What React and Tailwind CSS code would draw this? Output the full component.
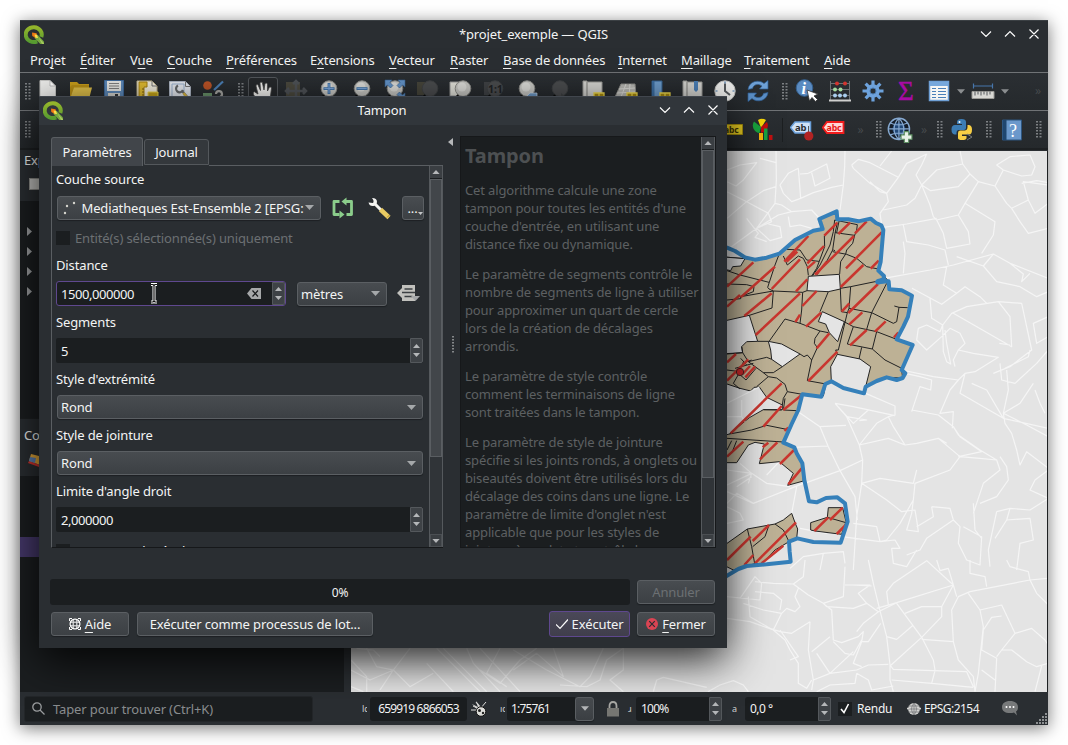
import React from "react";

/* ---------- map data ---------- */

const LIMIT =
  "M-20 280L21 293L45 303L75 322L105 329L140 323L178 311L225 270L280 242L308 237L298 207L350 184L352 208L385 208L415 214L452 206L468 219L484 226L490 240L482 335L475 362L492 378L490 390L472 396L506 394L508 418L545 421L576 437L564 500L550 530L530 568L578 585L545 660L556 670L548 684L530 690L500 682L470 693L437 710L432 730L370 714L334 694L316 702L304 740L247 733L235 780L215 822L190 878L223 892L230 910L247 940L253 990L267 1054L290 1057L318 1044L352 1042L375 1060L383 1115L362 1178L280 1176L232 1165L207 1175L209 1205L212 1235L140 1243L80 1248L55 1257L21 1277L-20 1310";

const AREAS = [
  "M0 320L75 326L105 329L140 323L178 311L225 270L280 242L308 237L298 207L350 184L352 208L385 208L415 214L452 206L484 226L490 240L482 335L475 362L492 378L506 394L508 418L545 421L576 437L564 500L530 568L578 585L545 660L548 684L500 682L437 710L432 730L370 714L334 694L318 702L310 738L247 733L235 780L215 822L190 878L223 892L247 940L250 993L203 1006L220 970L178 935L118 941L133 882L105 877L85 885L50 938L0 938Z",
  "M0 1195L82 1137L165 1122L190 1110L215 1090L225 1118L233 1137L230 1165L207 1175L165 1200L128 1240L104 1241L40 1260L0 1240Z",
  "M325 1073L368 1073L378 1115L365 1153L285 1143L272 1140L272 1118L322 1102Z",
];

const HOLES = [
  "M0 514L21 511L88 496L113 574L80 575L65 590L68 608L0 612Z",
  "M145 574L185 582L240 612L187 650L155 628L152 600Z",
  "M265 379L358 373L361 417L325 425L261 422Z",
  "M307 485L373 515L353 575L328 548L317 522L295 515Z",
  "M352 613L420 627L452 650L437 710L432 730L370 714L334 694L332 650Z",
  "M0 695L60 715L92 723L102 712L118 711L140 742L187 765L187 779L130 779L88 803L28 852L0 860Z",
  "M0 320L75 326L62 348L38 350L32 362L0 355Z",
];

const HATCHES =
  "M352 218L313 257M390 218L355 252M440 214L405 250M485 247L378 355M402 258L285 374M320 335L290 372M476 332L452 356M430 345L362 411M388 460L365 485M474 402L385 489M265 258L193 335M232 305L200 335M312 288L262 340M285 335L262 355M240 328L155 417M262 388L228 424M165 350L62 442M100 337L21 410M240 430L107 555M290 423L247 468M240 494L226 516M303 488L258 530M155 430L73 498M60 435L21 470M328 550L290 595M352 605L265 693M427 487L388 523M497 514L465 545M440 540L390 586M535 548L522 562M48 612L21 637M85 628L21 692M90 648L68 672M105 650L76 682M185 700L32 850M245 735L190 780M185 768L130 830M205 833L193 842M70 875L21 920M145 878L128 892M172 877L120 928M222 900L180 942M245 955L205 1003M147 1125L98 1173M92 1160L21 1230M228 1117L105 1240M190 1187L125 1240M100 1215L73 1245M368 1073L330 1110M325 1102L283 1143M377 1125L350 1152";

const PARCELS =
  "M344 210L412 224L410 240L404 256L345 248M344 210L340 245L330 285L300 345L278 377M352 218L345 250L338 300L318 338L290 375M357 214L350 248M404 256L398 280L380 300L377 312M345 302L340 300M338 305L380 313L410 325L440 350L475 357M377 312L362 335L359 372M361 417L364 485L382 488L387 475L392 410L470 394M392 410L361 415M313 257L314 290L290 355L275 378M200 298L240 300L260 330L297 334M190 318L202 345L235 318L250 325L262 350L265 376M178 311L165 345L143 412L147 417L160 423L248 427L261 422M21 362L60 375L147 397M21 402L80 404L102 410L100 425L62 440L62 446L21 450M62 440L160 423L156 474L88 496M248 427L245 480L240 520M325 425L300 485M240 520L300 543L325 548M148 573L195 507L240 520M300 543L285 565L283 580L292 593L275 630L262 692L318 702M275 630L262 615L252 620L240 612M382 488L355 600L347 600L352 613M387 475L455 488L440 538M455 488L500 400M455 488L520 520L530 515L537 472L523 468M537 472L563 473M400 530L382 582L457 597L470 545L400 530L372 515M470 545L530 568M457 597L495 630L545 655M425 592L417 627M113 574L145 574M65 590L68 608L85 635L130 668L160 668L187 650M85 635L140 622L155 628M21 612L68 608M130 668L145 680L110 710M145 680L170 684L195 703L202 725L190 745L187 765M202 725L247 733M195 745L190 780L230 782M66 640L95 630M62 625L80 645M45 655L100 640M55 670L78 690L108 655M21 660L60 665L40 700L60 717M130 779L185 780M28 852L95 840L140 826L200 838M21 865L190 876M21 900L35 872M35 910L50 872M82 1137L95 1190L104 1241M147 1125L135 1160L98 1190M165 1122L190 1140L207 1175M322 1102L378 1118";

const STREETS =
  "M168 3L169 90L165 160M165 160L110 235L21 300M21 60L60 45L110 38L70 90L48 108L21 95M120 25L168 38M21 125L80 155L145 190M80 155L130 122L168 110M80 155L21 205M110 235L175 195L215 185L185 165L165 160M145 190L155 215L110 235L150 272L185 262L180 230L145 222M80 205L115 250L105 262L140 275M215 185L275 180L300 207M205 200L210 230L240 225L275 235M235 55L205 70L180 105L190 130L215 155L242 145L235 55ZM265 70L320 42L330 85L285 108L275 68M240 72L265 70M242 145L280 128L335 112L370 105M375 3L374 50L370 105L360 180M395 45L415 28L450 38L535 82L500 130L450 100L400 55L395 45M515 3L480 48M535 82L560 40L600 22L620 12M500 130L505 155L480 190L485 225M450 95L480 125L500 130M620 12L605 45L588 75L605 105L585 145L560 165L490 180M605 105L650 60L728 42L720 3M728 42L750 72L775 95L825 108L850 60L905 78L935 75L945 50L930 15L870 20L830 45L850 60M750 72L715 110L632 122L605 105M605 105L630 165L640 200L650 210L715 195L735 160L775 95M735 160L825 215L820 255L785 310M825 108L860 160L875 175L925 150L910 95L985 105M925 150L945 190L985 160M875 175L900 215L925 250L985 235M905 100L950 92L985 98M490 232L560 222L650 205M550 225L560 275L625 285L675 300L685 345M650 210L670 250L680 295L750 282L745 245L715 195M550 275L555 310L550 370M492 385L630 360L700 345L820 312L790 348L710 320M680 350L670 405L710 430L665 463L576 415M820 312L870 340L985 385M790 348L830 395L900 410L950 440L985 425M710 430L735 410L780 440L800 460M870 340L910 372L905 395L930 370M630 445L635 505L668 525L695 490L740 470L835 455L905 460L935 600L870 650L820 670M835 455L870 500L875 590L700 490M870 585L838 580M930 600L925 620L855 655M668 525L660 545L620 525L595 535L590 570L620 600L665 560M668 525L670 605L680 635L692 642L680 580L675 540M665 560L690 535L720 550L735 580L715 600L700 630L705 650M715 600L760 610L835 622L765 665L735 670L715 690M735 670L720 730L850 805M715 690L640 680L545 660M556 670L600 680L635 690L632 720L600 710L575 785M715 690L690 720L660 790L700 785L697 835M575 780L655 795L700 830L715 855M437 730L525 768L525 795L505 800L520 830L555 885M345 760L400 770L525 797M345 760L380 800L418 885M345 760L400 820L445 780M380 800L440 810L418 812M505 800L470 820L418 885M418 885L505 865L555 885L590 880L655 865L680 880M418 885L428 930L425 1000L410 1100L400 1260M230 782L300 830L325 890L360 962L405 1040L412 1110M215 892L325 888M300 830L378 826M253 1000L360 962L428 930M425 1000L500 1050L545 1085L585 1080L590 1110M425 1000L480 985L580 1000L590 960M715 855L780 900L830 930L840 960L790 1000L770 1060L760 1090M655 865L720 920L780 925L830 930M720 920L690 960L585 1000L580 1050L540 1120L500 1170L480 1175M850 790L855 820L875 850L890 900L900 945L920 905L985 955M755 700L800 720L850 805L985 835M860 660L865 720L850 790L900 760L940 700M700 830L720 860L785 905L715 920M850 790L920 825L985 860M580 1050L575 1090L560 1140L595 1145L590 1110M635 1070L690 1075L700 1110L720 1130L715 1180L740 1230L780 1245L785 1160L730 1130M700 1110L620 1165L600 1200L560 1215M635 1070L640 1100L590 1130M760 1060L765 1140L785 1165M780 1060L830 1040L865 990L860 950L840 920M830 1085L870 1075L930 1080L985 1045M830 1085L805 1200L810 1250M870 1075L860 1110L825 1165M860 1110L930 1105L940 1170L900 1180L890 1260M985 1045L930 1020L945 990L985 960M400 1120L470 1130L480 1175L525 1170L540 1195L515 1195L520 1240L560 1250L590 1200M365 1160L480 1175M21 960L95 970L140 1000L210 1010M95 970L21 1005M178 935L140 975M21 1025L100 1060L250 1000M100 1060L50 1030L21 1060M60 940L95 970L85 1000M230 1010L215 1090M21 1070L60 1090L70 1110L21 1120M240 1135L320 1150M95 980L50 1010M300 1260L310 1210L370 1205L375 1240M310 1210L250 1220L210 1255M840 640L845 690L885 700L950 640L985 600M985 500L940 520L950 580L985 560M945 720L960 760L975 790";

const STREETS_SOUTH =
  "M21 1340L120 1350L125 1300L105 1280L60 1345M105 1295L160 1300L220 1302L250 1280L255 1230M220 1302L265 1335L310 1360L370 1340L375 1250M310 1360L320 1370L400 1375L440 1360L475 1385M440 1360L415 1330L450 1305L375 1305M395 1305L455 1308M105 1325L160 1330L185 1350L180 1380M70 1360L130 1380L185 1390L200 1375L225 1385L240 1370L225 1340L235 1315M85 1340L90 1400L150 1435L180 1445L215 1450L270 1415M21 1405L90 1415L160 1440L195 1470L210 1500L235 1540L235 1600L260 1615L275 1590M180 1440L235 1520L210 1530M160 1440L185 1390M315 1365L335 1380L340 1470L365 1478L415 1460L430 1445L425 1475L400 1540L425 1550M270 1415L265 1500L275 1560L280 1590L330 1570L410 1560L445 1545L505 1543M275 1505L330 1460M290 1510L330 1570L400 1505M340 1475L375 1510L400 1515L425 1470M425 1475L445 1475L482 1420M410 1445L430 1420L475 1385M445 1230L460 1300L482 1390L500 1460L510 1545L510 1590L520 1625M470 1375L530 1358L700 1305M505 1365L500 1325L520 1300L620 1232L700 1305L710 1340M530 1360L605 1462L640 1530L645 1560M475 1385L530 1358M555 1390L605 1370L665 1370L700 1305M665 1370L665 1400L605 1462L510 1548M605 1468L700 1475M500 1460L530 1468L580 1425M700 1475L695 1380L715 1340L750 1325L930 1290L985 1285M700 1475L715 1530L760 1580L765 1625M510 1545L520 1558L640 1562L740 1565L760 1610M515 1590L635 1600L760 1612M635 1600L645 1562M745 1330L780 1380L845 1365L885 1450L935 1435L975 1470L985 1485M780 1380L790 1430L775 1570L765 1625M845 1398L815 1402L790 1440L785 1500L830 1525L825 1625M785 1560L825 1590M830 1520L845 1500L885 1450M845 1500L875 1500L920 1535L950 1550L985 1540M965 1548L945 1625M930 1290L925 1265L870 1250L860 1230M930 1290L950 1330L985 1365M650 1230L660 1262L685 1255L700 1305M750 1230L750 1270L795 1280L800 1310M280 1590L275 1620M410 1570L405 1600L330 1605L290 1625M410 1570L445 1590L455 1620L520 1608M-36 1625L0 1605L40 1592L70 1605L85 1625M-200 1625L-190 1590L-170 1582L-40 1612M-290 1625L-330 1590L-290 1560L-290 1495L-340 1530L-360 1590L-400 1610L-480 1605M-350 1495L-390 1580L-420 1610L-520 1560L-620 1500M-500 1495L-470 1580L-550 1510L-620 1560M-550 1495L-600 1530L-660 1600L-720 1560M-660 1495L-700 1570L-640 1610M-720 1495L-600 1625M-760 1495L-740 1540L-660 1625M-830 1495L-700 1625M-850 1495L-720 1625M-880 1540L-800 1625M-860 1570L-930 1610L-980 1560L-930 1495M-980 1560L-1020 1620M-980 1560L-1050 1590L-1107 1560M-1060 1495L-1030 1550L-980 1560M-1107 1530L-1060 1580L-1060 1625M-1107 1610L-1070 1625M-1090 1495L-1040 1500L-1020 1520";

function MapCanvas() {
  return (
    <svg className="block h-[541px] w-[696px] shrink-0" viewBox="-1107 3 2088 1623" preserveAspectRatio="none" fill="none">
      <rect x="-1107" y="3" width="2088" height="1623" fill="#e4e4e4" />
      <path d={STREETS} stroke="#f5f5f5" strokeWidth="3.6" strokeLinejoin="round" />
      <path d={STREETS_SOUTH} stroke="#f5f5f5" strokeWidth="3.6" strokeLinejoin="round" />
      {AREAS.map((d) => (
        <path key={d} d={d} fill="#bdb195" stroke="#232323" strokeWidth="3" />
      ))}
      {HOLES.map((d) => (
        <path key={d} d={d} fill="#e4e4e4" stroke="#232323" strokeWidth="3" />
      ))}
      <path d="M65 750L65 800L75 815M118 711L21 760M21 800L65 800" stroke="#f5f5f5" strokeWidth="3.6" />
      <path d={PARCELS} stroke="#232323" strokeWidth="3" strokeLinejoin="round" />
      <path d={HATCHES} stroke="#c9362f" strokeWidth="7.5" />
      <path d={LIMIT} stroke="#3580ba" strokeWidth="12" strokeLinejoin="round" />
      <path d="M475 395L492 391" stroke="#3580ba" strokeWidth="17" strokeLinecap="round" />
      <circle cx="60" cy="666" r="11" fill="#c9282b" stroke="#30201e" strokeWidth="2.5" />
    </svg>
  );
}

/* ---------- icons ---------- */

function Icon({ children, className = "h-6 w-6" }) {
  return (
    <svg className={"block shrink-0 " + className} viewBox="0 0 24 24" fill="none">
      {children}
    </svg>
  );
}

function QgisLogo() {
  return (
    <svg className="block h-5 w-5 shrink-0" viewBox="0 0 20 20" fill="none">
      <defs>
        <linearGradient id="qg" x1="0" y1="0" x2="0" y2="1">
          <stop offset="0" stopColor="#94b52b" />
          <stop offset="1" stopColor="#569a30" />
        </linearGradient>
      </defs>
      <path d="M13.2 16.3A8 7.4 0 1 1 17.3 12" stroke="url(#qg)" strokeWidth="4" />
      <path d="M11 10.5L13.5 9.8L20 16.5V19H16.3L10.5 13Z" fill="#76a83f" />
      <path d="M14.5 12.5L20 18.2V19H18Z" fill="#a6c95f" />
      <path d="M8 7.5L12.6 8.2L13 11.5L11.8 13L8.3 11Z" fill="#ee7913" />
      <path d="M10.5 9.5L13 9.8L14 13L11.5 12.8Z" fill="#f8e04b" />
    </svg>
  );
}

function Lens({ dim, children }) {
  return (
    <g>
      <path d="M8 16L3 22" stroke="#0b0c0d" strokeWidth="3.4" />
      <circle cx="12" cy="9.6" r="7.8" fill={dim ? "#4b4d4f" : "#c9c9c5"} stroke={dim ? "#3f4244" : "#8c8c88"} />
      {!dim && <circle cx="11" cy="8" r="4.5" fill="#dededa" />}
      {children}
    </g>
  );
}

function Badge() {
  return <path d="M13 14h10v10H13zM18 14v8M14 19h8" fill="#a98c0f" stroke="#efd94e" strokeWidth="1.3" />;
}

const MAIN_TOOLS_A = [
  <Icon key="new"><path d="M4 1.5h10l5.500 5.500V22H4Z" fill="#ececea" stroke="#c4c4c2" /><path d="M14 1.500V7h5.500Z" fill="#fff" stroke="#aaa" strokeWidth=".7" /></Icon>,
  <Icon key="open"><path d="M1 3h7l2 2h10v4H1Z" fill="#c99e1a" /><path d="M3 6h17v14H1V8Z" fill="#b88f15" /><path d="M5 8.500h18L20 20H1Z" fill="#e0c04a" /></Icon>,
  <Icon key="save"><path d="M2.500 1.500h19v20h-19Z" fill="#5f8bbb" stroke="#3e6a9c" /><path d="M5 2h14v10H5Z" fill="#ebebe7" /><path d="M7 4.500h10M7 7h10M7 9.500h10" stroke="#808080" strokeWidth="1.200" /><path d="M6 14h12v7H6Z" fill="#d5d5d0" /><path d="M13 15h3v5h-3Z" fill="#35383a" /></Icon>,
  <Icon key="layout"><path d="M2 2h15l5 5v15H2Z" fill="#f3efdf" stroke="#c2b58b" /><path d="M4 3h8v5H9v14H4Z" fill="#e2bd31" stroke="#a88211" /><path d="M7 10h2M7 13h2M7 16h2" stroke="#7d600c" /><path d="M17 2v5h5" stroke="#777" /><path d="M13 13h10v8H13Z" fill="#c6a51a" stroke="#efd94e" /></Icon>,
  <Icon key="style"><path d="M1.500 2.500h16l5 5V22h-21Z" fill="#e7ebf1" stroke="#aeb7c5" /><path d="M4 5h12v14H4Z" stroke="#9bb2cf" /><path d="M10 6.500a3.600 3.600 0 1 0 5 4.500M14 12l7 8" stroke="#66696b" strokeWidth="2.200" /><path d="M15.500 14l6.500 8" stroke="#dcb841" strokeWidth="2.500" /><path d="M17.500 2.500v5h5" stroke="#777" /></Icon>,
  <Icon key="symb"><circle cx="6.500" cy="6.500" r="4.300" fill="#bc5427" /><path d="M13 11L22 2.500" stroke="#4c80b7" strokeWidth="2.200" /><path d="M2 14h9v8H2Z" fill="#6a946b" /><path d="M15 15a3 3 0 1 1 4 3l4 4" stroke="#a9a9a5" strokeWidth="2.200" /></Icon>,
];

const Hand = () => (
  <Icon><path d="M7.500 22L2.500 13.500Q1.500 11 3.500 10.800L7 13L5 5Q5 3 6.800 3.500L9.500 9.500L9 2Q9.500.300 11.300 1.500L13 9L14 2.500Q15.500 1.500 16.400 3L16.500 10L18.500 6Q20 5.500 20.500 7L19.500 15L17 22Z" fill="#f5f5f3" stroke="#454545" strokeWidth=".8" /></Icon>
);

const MAIN_TOOLS_B = [
  <Icon key="pansel"><path d="M2 3h14v14H2Z" fill="#4c4a3f" /><path d="M12 2v20M2 12h20M9 5l3-3 3 3M5 9l-3 3 3 3M19 9l3 3-3 3" stroke="#4f5357" strokeWidth="2.500" /></Icon>,
  <Icon key="zin"><Lens><path d="M12 4v11M6.500 9.600h11" stroke="#4073a8" strokeWidth="2.800" /><path d="M12 4.800v9.500M7.300 9.600h9.400" stroke="#83ade0" strokeWidth="1" /></Lens></Icon>,
  <Icon key="zout"><Lens><path d="M6.500 9.600h11" stroke="#4073a8" strokeWidth="2.800" /><path d="M7.300 9.600h9.400" stroke="#83ade0" /></Lens></Icon>,
  <Icon key="zfull"><Lens /><path d="M2 1h7L7 3.500l3 3L7.500 9l-3-3L2 8ZM22 1h-7l2 2.500-3 3L16.500 9l3-3L22 8ZM22 21h-7l2-2.500-3-3 2.500-2.500 3 3L22 14Z" fill="#6494c9" stroke="#365f8e" strokeWidth=".6" /></Icon>,
  <Icon key="zsel"><path d="M1 3h12v13H1Z" fill="#47463b" /><g transform="translate(2 0)"><Lens dim /></g></Icon>,
  <Icon key="zlayer"><path d="M1 3h12v14H1Z" fill="#e4e4dc" stroke="#999" /><g transform="translate(2 0)"><Lens /></g></Icon>,
  <Icon key="znative"><path d="M2 3h12v13H2Z" fill="#404346" /><g transform="translate(1 0)"><Lens dim><text x="5" y="13.500" fontSize="10.500" fontWeight="bold" fontFamily="Noto Sans" fill="#1f2224">1:1</text></Lens></g></Icon>,
  <Icon key="zlast"><Lens /><path d="M11 18l4-4h7v8H11Z" fill="#6f9bc9" stroke="#d0deee" strokeWidth=".7" /></Icon>,
  <Icon key="znext"><Lens dim /><path d="M13 14l6 5-6 4Z" fill="#3e4143" /></Icon>,
  <Icon key="newmap"><path d="M2 2h4v18H2ZM6 3h15v16H6Z" fill="#d5d5d1" stroke="#9b9b97" /><Badge /></Icon>,
  <Icon key="new3d"><path d="M7 5h14l1 12L1 18Z" fill="#b9b9b5" stroke="#8e8e8a" /><path d="M5 10l16-1M3 14l18-1M12 5L7 18M16 5l-1 13" stroke="#dcdcd8" /><Badge /></Icon>,
  <Icon key="bookmark"><path d="M5 2h10v17H5Z" fill="#6e9dcc" stroke="#33618f" /><path d="M5 2h2.500v17H5Z" fill="#3d6fa3" /><Badge /></Icon>,
  <Icon key="bookmarks"><path d="M3 2h4v17H3ZM7 3h15v16H7Z" fill="#d5d5d1" stroke="#9b9b97" /><path d="M14 2h4v9l-2 2-2-2Z" fill="#4c80b7" /></Icon>,
  <Icon key="clock"><circle cx="12" cy="12" r="10.200" fill="#ededeb" stroke="#c5c5c3" /><path d="M12 4.500V12l5 4" stroke="#55595c" strokeWidth="2" /><path d="M12 2.500v2M12 19.500v2M2.500 12h2M19.500 12h2" stroke="#4677a8" strokeWidth="1.200" /></Icon>,
  <Icon key="refresh"><path d="M2 10.500C3 2 13 0 18 4.500L22 1.500V10H13.500L16 7C12 4 7.500 5.500 6.500 9.500Z" fill="#6fa1d6" stroke="#2e5f95" strokeWidth=".7" /><path d="M22 13.500C21 22 11 24 6 19.500L2 22.500V14H10.500L8 17C12 20 16.500 18.500 17.500 14.500Z" fill="#5b8ec5" stroke="#2e5f95" strokeWidth=".7" /></Icon>,
];

const MAIN_TOOLS_C = [
  <Icon key="identify"><circle cx="9.500" cy="9" r="8.300" fill="#5a8ac0" stroke="#34608f" /><text x="6.500" y="14.500" fontSize="16" fontStyle="italic" fontWeight="bold" fontFamily="Liberation Serif" fill="#fff">i</text><path d="M12 11L14.500 22L17 18.500L20.500 22.500L22.500 20.500L19 17L23 15Z" fill="#fff" stroke="#333" strokeWidth=".8" /></Icon>,
  <Icon key="abacus"><path d="M2.500 2v19M21.500 2v19M2 4.500h20M2 10.500h20M2 16.500h20" stroke="#6c7073" /><path d="M1 20.500h22v2H1Z" fill="#cfcfcd" /><g fill="#d3342f"><circle cx="9" cy="4.500" r="2" /><circle cx="17" cy="4.500" r="2" /></g><g fill="#a5dba0"><circle cx="7" cy="10.500" r="2" /><circle cx="12.500" cy="10.500" r="2" /></g><g fill="#a9cdee"><circle cx="7" cy="16.500" r="2" /><circle cx="12" cy="16.500" r="2" /><circle cx="17" cy="16.500" r="2" /></g></Icon>,
  <Icon key="gear"><path d="M12 1.500v21M1.500 12h21M4.600 4.600l14.800 14.800M19.400 4.600L4.600 19.400" stroke="#6da2dc" strokeWidth="3.200" /><circle cx="12" cy="12" r="6.700" fill="#6da2dc" /><circle cx="12" cy="12" r="3" fill="#293036" stroke="#4979ad" /></Icon>,
  <Icon key="sigma"><text x="4" y="21" fontSize="27" fontFamily="Liberation Serif" fill="#a80ba5" stroke="#a80ba5" strokeWidth=".5">Σ</text></Icon>,
  <Icon key="table"><path d="M2.500 2.500h19v19h-19Z" fill="#f6f6f4" stroke="#6fa0d5" strokeWidth="1.500" /><path d="M3 3h18v4H3Z" fill="#77a8dc" /><path d="M5 9.500h4M5 12.500h4M5 15.500h4M5 18.500h4M11 9.500h8M11 12.500h8M11 15.500h8M11 18.500h8" stroke="#4a80b9" strokeWidth="1.100" /></Icon>,
];

const Ruler = () => (
  <Icon><path d="M2.500 4.500v5M21.500 4.500v5M2.500 7h19" stroke="#4776ab" strokeWidth="1.200" /><path d="M1 12.500h22v7H1Z" fill="#d8d8d4" stroke="#9b9b97" /><path d="M4 12.500v4M7 12.500v3M10 12.500v4M13 12.500v3M16 12.500v4M19 12.500v3" stroke="#55595c" /></Icon>
);

function Grip({ className }) {
  return (
    <svg className={"block h-[17px] w-[6px] shrink-0 " + (className || "")} viewBox="0 0 6 17">
      {[0, 3, 6, 9, 12, 15].map((y) => (
        <g key={y} fill="#7d8083">
          <rect x="0" y={y} width="2" height="1.500" />
          <rect x="3.500" y={y} width="2" height="1.500" />
        </g>
      ))}
    </svg>
  );
}

const Cell = ({ w = "w-[33px]", children }) => (
  <div className={"flex h-full shrink-0 items-center justify-center " + w}>{children}</div>
);

const Caret = ({ className = "h-[5px] w-[9px] text-[#a5a8aa]", up }) => (
  <svg className={"block shrink-0 " + className} viewBox="0 0 9 5">
    <path d={up ? "M0 5L4.500 0L9 5Z" : "M0 0L4.500 5L9 0Z"} fill="currentColor" />
  </svg>
);

function WindowButtons() {
  return (
    <svg className="block h-3 w-[60px] shrink-0" viewBox="0 0 60 12" fill="none" stroke="#fcfcfc" strokeWidth="1.150">
      <path d="M1 3.500L6 8.500L11 3.500M25 8.500L30 3.500L35 8.500M49.500 1.500L58.500 10.500M58.500 1.500L49.500 10.500" />
    </svg>
  );
}

/* ---------- controls ---------- */

const Btn = ({ className = "", children }) => (
  <div className={"flex shrink-0 items-center rounded-[3px] border border-[#5b5f63] bg-linear-to-b from-[#484c50] to-[#3c4044] shadow-[0_1px_1px_#1d2023] " + className}>
    {children}
  </div>
);

const Spin = () => (
  <div className="flex h-full w-[13px] shrink-0 flex-col items-center justify-center gap-[5px] rounded-r-[2px] border border-[#54585c] bg-[#3e4246]">
    <Caret up className="h-[4px] w-[7px] text-[#b5b7b9]" />
    <Caret className="h-[4px] w-[7px] text-[#b5b7b9]" />
  </div>
);

const Combo = ({ className = "", children }) => (
  <Btn className={"h-6 justify-between pr-[6px] pl-[3px] " + className}>
    {children}
    <Caret />
  </Btn>
);

const Label = ({ className = "", children }) => <div className={"flex h-[18px] items-center " + className}>{children}</div>;

const SpinInput = ({ children }) => (
  <div className="flex h-[25px] w-[367px] items-center rounded-[2px] bg-[#1b1e20]">
    <span className="flex-1 pt-px pl-[5px] tracking-[-0.43px]">{children}</span>
    <Spin />
  </div>
);

const ScrollBar = ({ thumb }) => (
  <div className="flex w-[14px] shrink-0 flex-col border-x border-[#55595d] bg-[#303438]">
    <div className="flex h-[13px] shrink-0 items-center justify-center border-b border-[#1b1e20] bg-[#3a3e42]"><Caret up className="h-[4px] w-[8px] text-[#b5b7b9]" /></div>
    <div className={"shrink-0 border border-[#5a5e62] bg-[#42464a] " + thumb} />
    <div className="flex-1" />
    <div className="flex h-[13px] shrink-0 items-center justify-center border border-[#4b4f53] bg-[#3a3e42]"><Caret className="h-[4px] w-[8px] text-[#b5b7b9]" /></div>
  </div>
);

/* ---------- dialog ---------- */

function Parameters() {
  return (
    <div className="w-[392px]">
      <div className="flex h-[29px] items-end">
        <div className="flex h-[29px] w-[92px] items-center justify-center rounded-t-[3px] border border-b-0 border-[#5a5e62] bg-[#41454a]">Paramètres</div>
        <div className="mb-px ml-px flex h-[26px] w-[65px] items-center justify-center rounded-t-[3px] border border-[#54585c] bg-[#34383c]">Journal</div>
        <div className="h-px flex-1 bg-[#5a5e62]" />
      </div>
      <div className="flex h-[382px] overflow-hidden border-b border-l border-[#16181a] border-l-[#5a5e62]">
        <div className="flex-1 overflow-hidden pl-1">
          <Label className="mt-[4px]">Couche source</Label>
          <div className="mt-[7px] flex h-[25px] items-center">
            <Combo className="ml-px w-[264px]">
              <svg className="h-[18px] w-[18px] shrink-0" viewBox="0 0 18 18" fill="#d6d6ce"><circle cx="6" cy="7" r="1.200" /><circle cx="13" cy="4" r="1.200" /><circle cx="4" cy="14" r="1.200" /></svg>
              <span className="ml-[2px] w-[223px] overflow-hidden whitespace-nowrap">Mediatheques Est-Ensemble 2 [EPSG:</span>
            </Combo>
            <svg className="ml-[10px] h-6 w-6" viewBox="0 0 24 24" fill="none">
              <path d="M15 5.500H20.500V18.500H15.500M8.500 5.500H3V18.500H8.500" stroke="#8bcd8b" strokeWidth="2.800" strokeLinejoin="round" />
              <path d="M15.500 1.500V9.500L10.500 5.500ZM8.500 14.500v8L13.500 18.500Z" fill="#8bcd8b" />
            </svg>
            <svg className="ml-[12px] h-6 w-6" viewBox="0 0 24 24" fill="none">
              <path d="M5 2Q10 2 10 6Q9.500 9.500 6.500 10Q2.500 10.500 1.500 6.500L6 7Q7.500 5 5 2Z" fill="#f4f4f2" />
              <path d="M8 8L15 15" stroke="#f4f4f2" strokeWidth="3" />
              <path d="M13.500 13.500L22 21.500" stroke="#e9cb62" strokeWidth="4.500" />
              <path d="M20 21.500L22.500 19" stroke="#ab8829" />
            </svg>
            <Btn className="ml-[11px] h-6 w-[22px] justify-center text-[13px]">
              <span>...</span>
              <Caret className="mt-3 -mr-1 h-[3px] w-[5px] text-[#c5c7c9]" />
            </Btn>
          </div>
          <div className="mt-[9px] flex h-[18px] items-center gap-[5px] text-[#6c7073]">
            <div className="h-[14px] w-[14px] bg-[#1b1e20]" />Entité(s) sélectionnée(s) uniquement
          </div>
          <Label className="mt-[9px]">Distance</Label>
          <div className="mt-[7px] flex h-[25px] items-center">
            <div className="flex h-[25px] w-[230px] items-center rounded-[3px] border border-[#5f488f] bg-[#1b1e20]">
              <span className="pl-1 tracking-[-0.43px]">1500,000000</span>
              <svg className="ml-[16px] h-[21px] w-[8px]" viewBox="0 0 8 21" fill="none"><path d="M1 1.500H3L4 2.500L5 1.500H7M4 2.500V18M1 19H3L4 18L5 19H7" stroke="#fff" strokeWidth="3" /><path d="M1 1.500H3L4 2.500L5 1.500H7M4 2.500V18M1 19H3L4 18L5 19H7" stroke="#111" strokeWidth="1.200" /></svg>
              <div className="flex-1" />
              <svg className="mr-[11px] h-[11px] w-[14px]" viewBox="0 0 14 11" fill="none"><path d="M0 5.500L4.500 0H14V11H4.500Z" fill="#a6a8a9" /><path d="M5.500 2.500L11 8.500M11 2.500L5.500 8.500" stroke="#17191b" strokeWidth="1.200" /></svg>
              <Spin />
            </div>
            <Combo className="ml-[11px] w-[90px]">mètres</Combo>
            <svg className="ml-[10px] h-[17px] w-[23px]" viewBox="0 0 23 17"><path d="M0 8L5 3V13ZM5 0H18V16H5Z" fill="#c1c1bd" /><path d="M7.500 4H15.500M7.500 11.500H15.500M5 7.500H18" stroke="#3c4043" strokeWidth="1.300" /><path d="M14 11H23L18.500 16Z" fill="#a5a7a9" /></svg>
          </div>
          <Label className="mt-[7px]">Segments</Label>
          <div className="mt-[7px]"><SpinInput>5</SpinInput></div>
          <Label className="mt-[7px]">Style d'extrémité</Label>
          <div className="mt-[7px] pl-px"><Combo className="w-[366px]">Rond</Combo></div>
          <Label className="mt-[7px]">Style de jointure</Label>
          <div className="mt-[7px] pl-px"><Combo className="w-[366px]">Rond</Combo></div>
          <Label className="mt-[7px]">Limite d'angle droit</Label>
          <div className="mt-[7px]"><SpinInput>2,000000</SpinInput></div>
          <div className="mt-[12px] flex items-start gap-[5px]">
            <div className="h-[14px] w-[14px] bg-[#1b1e20]" /><span className="-mt-[2px] leading-[18px]">Regrouper le résultat</span>
          </div>
        </div>
        <ScrollBar thumb="h-[278px]" />
      </div>
    </div>
  );
}

function HelpPane() {
  return (
    <div className="ml-[17px] flex h-[412px] w-[256px] border border-[#16181a] bg-[#1b1e20]">
      <div className="flex-1 overflow-hidden pl-[4px] leading-[18px] whitespace-nowrap text-[#5d6062]">
        <div className="mt-[5px] text-[20px] leading-[28px] font-bold text-[#4d5052]">Tampon</div>
        <p className="mt-[11px]">Cet algorithme calcule une zone<br />tampon pour toutes les entités d'une<br />couche d'entrée, en utilisant une<br />distance fixe ou dynamique.</p>
        <p className="mt-3">Le paramètre de segments contrôle le<br />nombre de segments de ligne à utiliser<br />pour approximer un quart de cercle<br />lors de la création de décalages<br />arrondis.</p>
        <p className="mt-3">Le paramètre de style contrôle<br />comment les terminaisons de ligne<br />sont traitées dans le tampon.</p>
        <p className="mt-3">Le paramètre de style de jointure<br />spécifie si les joints ronds, à onglets ou<br />biseautés doivent être utilisés lors du<br />décalage des coins dans une ligne. Le<br />paramètre de limite d'onglet n'est<br />applicable que pour les styles de<br />jointure à onglet et contrôle la</p>
      </div>
      <ScrollBar thumb="h-[328px]" />
    </div>
  );
}

function Dialog() {
  return (
    <div className="absolute top-[96px] left-[39px] flex h-[552px] w-[688px] flex-col bg-[#2a2e32] shadow-[0_12px_40px_rgba(0,0,0,0.85)]">
      <div className="flex h-[29px] shrink-0 items-center border-t border-[#41464d] bg-[#31363b] pl-1">
        <QgisLogo />
        <div className="ml-[293px] w-[52px] pb-[2px] text-center">Tampon</div>
        <div className="flex-1" />
        <div className="pr-[8px] pb-[2px]"><WindowButtons /></div>
      </div>
      <div className="mt-[12px] flex h-[412px] pl-3">
        <Parameters />
        <div className="relative w-0">
          <div className="absolute top-[1px] left-[5px] flex h-[216px] w-[9px] flex-col justify-between">
            <svg className="h-2 w-[5px]" viewBox="0 0 5 8"><path d="M5 0V8L0 4Z" fill="#b5b7b9" /></svg>
            <svg className="ml-[4px] h-[18px] w-[3px]" viewBox="0 0 3 18" fill="#85888a">{[0, 3, 6, 9, 12, 15].map((y) => <rect key={y} width="2" height="1.500" y={y} />)}</svg>
          </div>
        </div>
        <div className="-mt-px"><HelpPane /></div>
      </div>
      <div className="mt-[30px] flex h-[26px] items-center pl-[11px]">
        <div className="flex h-[26px] w-[580px] items-center justify-center rounded-[3px] bg-[#1b1e20] pt-[2px] text-[12px]">0%</div>
        <Btn className="ml-[7px] h-6 w-[78px] justify-center text-[#6c7073]">Annuler</Btn>
      </div>
      <div className="mt-[6px] flex h-[26px] items-center pl-[12px]">
        <Btn className="h-6 w-[78px] justify-center gap-1">
          <svg className="h-3 w-3" viewBox="0 0 12 12" fill="none" stroke="#fcfcfc"><circle cx="6" cy="6" r="4.900" strokeWidth="1.200" /><circle cx="6" cy="6" r="2" /><path d="M.5 3V.5H3M9 .5h2.500V3M.5 9v2.500H3M9 11.500h2.500V9M4.200 1V4.200H1M7.800 1V4.200H11M4.200 11V7.800H1M7.800 11V7.800H11" /></svg>
          <span><u className="underline-offset-[3px]">A</u>ide</span>
        </Btn>
        <Btn className="ml-2 h-6 w-[236px] justify-center">Exécuter comme processus de lot...</Btn>
        <div className="ml-[176px] flex h-[26px] w-[81px] items-center justify-center gap-1 rounded-[3px] border border-[#5f488f] bg-linear-to-b from-[#4a4858] to-[#403e4c]">
          <svg className="h-3 w-3" viewBox="0 0 12 12" fill="none" stroke="#fcfcfc" strokeWidth="1.200"><path d="M0 6.500L4 10.500L12 1.500" /></svg>
          Exécuter
        </div>
        <Btn className="ml-[7px] h-6 w-[78px] justify-center gap-1">
          <svg className="h-3 w-3" viewBox="0 0 12 12" fill="none"><circle cx="6" cy="6" r="6" fill="#da4453" /><path d="M3.200 3.200L8.800 8.800M8.800 3.200L3.200 8.800" stroke="#2a2e32" strokeWidth="1.200" /></svg>
          <span><u className="underline-offset-[3px]">F</u>ermer</span>
        </Btn>
      </div>
    </div>
  );
}

/* ---------- main window ---------- */

// name, cell width, index of the mnemonic letter
const MENU = [
  ["Projet", "w-[50px]", 3],
  ["Éditer", "w-[50px]", 0],
  ["Vue", "w-[37px]", 1],
  ["Couche", "w-[59px]", 0],
  ["Préférences", "w-[84px]", 0],
  ["Extensions", "w-[79px]", 1],
  ["Vecteur", "w-[61px]", 0],
  ["Raster", "w-[53px]", 0],
  ["Base de données", "w-[115px]", 0],
  ["Internet", "w-[63px]", 0],
  ["Maillage", "w-[63px]", 0],
  ["Traitement", "w-[80px]", 0],
  ["Aide", "w-[40px]", 0],
];

const More = () => <span className="text-[12px] text-[#45494c]">»</span>;

function Toolbars() {
  return (
    <>
      <div className="flex h-[38px] items-center border-t border-[#707376] bg-linear-to-b from-[#2b2f33] to-[#25292c] pb-px pl-[5px]">
        <Grip />
        {MAIN_TOOLS_A.map((icon) => <Cell key={icon.key}>{icon}</Cell>)}
        <Cell w="w-[17px]"><Grip className="ml-[6px]" /></Cell>
        <Cell><div className="mt-[3px] flex h-[32px] w-[30px] items-center justify-center rounded-[3px] border border-[#54585c] bg-[#26292c]"><Hand /></div></Cell>
        {MAIN_TOOLS_B.map((icon) => <Cell key={icon.key}>{icon}</Cell>)}
        <Cell w="w-[16px]"><Grip className="ml-[5px]" /></Cell>
        {MAIN_TOOLS_C.map((icon) => <Cell key={icon.key}>{icon}</Cell>)}
        <Cell w="w-[11px]"><Caret className="h-[5px] w-[8px] text-[#8b8e90]" /></Cell>
        <Cell><Ruler /></Cell>
        <Cell w="w-[11px]"><Caret className="h-[5px] w-[8px] text-[#8b8e90]" /></Cell>
        <Cell w="w-[56px]"><More /></Cell>
      </div>
      <div className="flex h-[40px] items-center border-t border-b-2 border-t-[#707376] border-b-[#1d2022] bg-linear-to-b from-[#2b2f33] to-[#25292c] pl-[5px]">
        <Grip />
        <div className="ml-[7px] h-3 w-2 bg-[#8a3518]" />
        <div className="ml-[676px] flex h-full items-center">
          <Cell><svg className="h-[11px] w-[24px]" viewBox="0 0 24 11"><path d="M0 5.500L4 .5H23.500V10.500H4Z" fill="#e6ca22" stroke="#a48d0c" /><text x="5" y="8.500" fontSize="8.500" fontWeight="bold" fontFamily="Noto Sans" fill="#3a3205">abc</text></svg></Cell>
          <Cell><Icon><path d="M9 10L6 2A8 8 0 0 1 14 2Z" fill="#f6d60a" /><path d="M9 9L2 3.500A7.500 7.500 0 0 0 7.500 15Z" fill="#18a33d" /><path d="M9 9L15 4A7.500 7.500 0 0 1 9 15Z" fill="#c00d0d" /><path d="M7 15h4v7H7Z" fill="#f8b30b" /><path d="M12 10.500h3.500V22H12Z" fill="#17a340" /><path d="M17 17h3.500v5H17Z" fill="#c01010" /></Icon></Cell>
          <div className="mx-[2px] h-6 w-px bg-[#1c1f21]" />
          <Cell><Icon><path d="M.5 9.500L5 4H20.500V15H5Z" fill="#cfe1f6" stroke="#6a9fd9" strokeWidth="1.500" /><text x="5" y="13" fontSize="9.500" fontWeight="bold" fontFamily="Noto Sans" fill="#2b2e31">ab</text><path d="M18.500 8v10" stroke="#555" /><circle cx="18.800" cy="18" r="4.600" fill="#b22323" /></Icon></Cell>
          <Cell w="w-[32px]"><Icon><path d="M.8 9.500L5 4H21.500V15H5Z" fill="#ffd6d6" stroke="#f21d1d" strokeWidth="1.800" /><text x="4.500" y="12.800" fontSize="8.800" fontWeight="bold" fontFamily="Noto Sans" fill="#e81616">abc</text></Icon></Cell>
          <Cell w="w-[21px]"><More /></Cell>
          <Cell w="w-[15px]"><Grip /></Cell>
          <Cell w="w-[28px]"><Icon className="h-[26px] w-[26px]"><circle cx="11" cy="11" r="9.800" fill="#151d27" stroke="#86a9d0" strokeWidth="1.300" /><circle cx="11" cy="11" r="6" fill="#2c66ad" opacity=".6" /><path d="M1 11h20M11 1v20M3 5.500Q11 9 19 5.500M3 16.500Q11 13 19 16.500M11 1Q2 11 11 21M11 1Q20 11 11 21" stroke="#86a9d0" strokeWidth="1.100" /><path d="M16 13.500h4v3h3v4h-3v3h-4v-3h-3v-4h3Z" fill="#e8f1e8" stroke="#5f9163" /></Icon></Cell>
          <Cell w="w-[20px]"><More /></Cell>
          <Cell w="w-[12px]"><Grip /></Cell>
          <Cell w="w-[32px]"><Icon><path d="M7 6V4Q7 1 11.500 1Q16 1 16 4V10Q16 12 14 12H9Q6.500 12 6.500 15V16.500H4.500Q1.500 16 1.500 11.500Q1.500 7 5 7H12V6Z" fill="#3d7db4" /><path d="M16.500 18V20Q16.500 22 12 22Q8 22 8 20V15Q8 12.500 10 12.500H15Q17.500 12 17.500 9V7H19Q22 7.500 22 11.500Q22 16.500 19 16.500H12V18Z" fill="#f8cf45" /><circle cx="9.500" cy="4" r="1" fill="#fff" /><path d="M17 16l5 3-5 3" stroke="#74787b" /></Icon></Cell>
          <Cell w="w-[22px]"><Grip /></Cell>
          <Cell w="w-[24px]"><Icon><path d="M2.500 2h19v20h-19Z" fill="#6b98cb" stroke="#2d557f" /><path d="M3 2h3.500v20H3Z" fill="#1f466f" /><text x="9" y="18.500" fontSize="18" fontFamily="Liberation Serif" fill="#fff">?</text></Icon></Cell>
          <Cell w="w-[30px]"><Grip /></Cell>
        </div>
      </div>
    </>
  );
}

function Docks() {
  return (
    <div className="w-[331px] shrink-0 pr-[7px]">
      <div className="h-[50px] border-r border-[#1d2022] bg-[#2a2e32] pl-1">
        <div>Explorateur</div>
        <div className="mt-[9px] ml-[5px] h-3 w-4 border border-[#8e8e8a] bg-[#c6c6c2]" />
      </div>
      <div className="flex h-[217px] flex-col gap-[11px] bg-[#1b1e20] pt-[26px] pl-[7px]">
        {[0, 1, 2, 3].map((i) => (
          <svg key={i} className="h-[9px] w-[5px]" viewBox="0 0 5 9"><path d="M0 0L5 4.500L0 9Z" fill="#9fa1a3" /></svg>
        ))}
      </div>
      <div className="h-[58px] border-t border-[#1d2022] bg-[#2a2e32] pt-[7px] pl-1">
        <div>Couches</div>
        <svg className="mt-[8px] ml-[4px] h-4 w-4" viewBox="0 0 16 16"><path d="M3 2L15 5L12 13L1 9Z" fill="#e6a93a" /><path d="M1 9L12 13L11 15L0 11Z" fill="#d3342f" /><path d="M2 5L8 6L7 11L1 9Z" fill="#5b82b8" /></svg>
      </div>
      <div className="h-[216px] bg-[#1b1e20] pt-[61px]">
        <div className="h-5 bg-[#46396c]" />
      </div>
    </div>
  );
}

function StatusBar() {
  return (
    <div className="flex h-[33px] items-center bg-[#2a2e32] pl-1 text-[12px]">
      <div className="flex h-[26px] w-[289px] items-center rounded-[3px] border border-[#232629] bg-[#1b1e20] pl-[7px] text-[13px] text-[#8a8d8f]">
        <svg className="mr-2 h-[13px] w-[13px]" viewBox="0 0 13 13" fill="none" stroke="#9b9d9f" strokeWidth="1.300"><circle cx="5" cy="5" r="4.200" /><path d="M8 8L12.500 12.500" /></svg>
        Taper pour trouver (Ctrl+K)
      </div>
      <div className="ml-[49px] w-[5px] overflow-hidden text-[9px] text-[#cfd0d1]">lc</div>
      <div className="ml-[3px] flex h-6 w-[97px] items-center justify-center rounded-[3px] bg-[#1b1e20] tracking-[-0.85px]">659919 6866053</div>
      <svg className="ml-[4px] h-4 w-[17px]" viewBox="0 0 17 16" fill="none"><path d="M2 5L8 8M5 1L9 7M15 1L9 8M0 9L7 9" stroke="#e4e4e2" /><path d="M1 3L7 6L6 8ZM5 0L10 6L7 6Z" fill="#d8d8d6" /><circle cx="10" cy="10.500" r="4.800" fill="#dededa" stroke="#111" /><circle cx="8.500" cy="9.500" r="1.500" fill="#222" /><circle cx="12" cy="12" r="1.200" fill="#222" /></svg>
      <div className="ml-[12px] w-[5px] overflow-hidden text-[9px] text-[#cfd0d1]">ıc</div>
      <div className="ml-[2px] flex h-6 w-[68px] items-center rounded-l-[3px] bg-[#1b1e20] pl-1 tracking-[-0.8px]">1:75761</div>
      <Btn className="h-6 w-[19px] justify-center"><Caret className="h-[5px] w-[8px] text-[#b5b7b9]" /></Btn>
      <svg className="ml-[13px] h-[16px] w-[12px]" viewBox="0 0 12 16" fill="none"><path d="M2.500 8V5Q2.500 1 6 1Q9.500 1 9.500 5V8" stroke="#a9a9a5" strokeWidth="1.800" /><path d="M0 7H12V15.500H0Z" fill="#777773" /></svg>
      <div className="ml-[9px] w-[5px] text-[9px] text-[#cfd0d1]">ɹ</div>
      <div className="ml-[3px] flex h-6 w-[86px] items-center rounded-[3px] bg-[#1b1e20]"><span className="flex-1 pt-px pl-[5px] tracking-[-0.8px]">100%</span><Spin /></div>
      <div className="ml-[10px] w-[5px] overflow-hidden text-[9px] text-[#cfd0d1]">ar</div>
      <div className="ml-[8px] flex h-6 w-[86px] items-center rounded-[3px] bg-[#1b1e20]"><span className="flex-1 pl-[5px] tracking-[-0.5px]">0,0 °</span><Spin /></div>
      <div className="ml-[7px] flex h-[14px] w-[14px] items-center justify-center bg-[#1b1e20]">
        <svg className="h-[11px] w-[10px]" viewBox="0 0 10 11" fill="none" stroke="#fcfcfc" strokeWidth="1.600"><path d="M1 6L4 9.500L8.500 1" /></svg>
      </div>
      <div className="ml-[5px] w-[50px] tracking-[-0.25px]">Rendu</div>
      <svg className="h-[14px] w-[14px]" viewBox="0 0 14 14" fill="none"><circle cx="7" cy="7" r="5.900" fill="#d3d3d1" /><path d="M0 7H14M1.500 4H12.500M1.500 10H12.500M7 1V13M7 1Q2 7 7 13M7 1Q12 7 7 13" stroke="#77797b" strokeWidth=".8" /><path d="M0 6.500H2.500M11.500 6.500H14" stroke="#d3d3d1" strokeWidth="1.500" /></svg>
      <div className="ml-[3px] w-[78px] pt-px tracking-[-0.55px]">EPSG:2154</div>
      <svg className="h-[15px] w-[16px]" viewBox="0 0 16 15"><path d="M8 0C3 0 0 2.500 0 6.200C0 10 3 12 8 12C9.500 12 11 12 12 11.500L15 14.500L14 10.500C15.500 9.500 16 8 16 6.200C16 2.500 13 0 8 0Z" fill="#77797a" /><g fill="#fff"><circle cx="4.500" cy="6" r="1" /><circle cx="8" cy="6" r="1" /><circle cx="11.500" cy="6" r="1" /></g></svg>
      <svg className="mt-[20px] ml-auto h-3 w-3" viewBox="0 0 12 12" fill="#8d9092"><path d="M9 0h2v2H9ZM9 3h2v2H9ZM6 3h2v2H6ZM9 6h2v2H9ZM6 6h2v2H6ZM3 6h2v2H3ZM9 9h2v2H9ZM6 9h2v2H6ZM3 9h2v2H3ZM0 9h2v2H0Z" /></svg>
    </div>
  );
}

export default function App() {
  return (
    <div className="relative h-[745px] w-[1068px] overflow-hidden bg-white p-5 font-['Noto_Sans',sans-serif] text-[13px] leading-[18px] tracking-[-0.13px] text-[#f3f4f4]">
      <div className="flex h-[705px] w-[1028px] flex-col bg-[#2a2e32] shadow-[0_3px_16px_rgba(0,0,0,0.55)]">
        <div className="flex h-[28px] items-center border-t border-[#3b4044] pl-1">
          <QgisLogo />
          <div className="ml-[403px] w-[173px] pb-[2px] text-center">*projet_exemple — QGIS</div>
          <div className="flex-1" />
          <div className="pr-[8px] pb-[2px]"><WindowButtons /></div>
        </div>
        <div className="flex h-[24px] items-center pl-[10px]">
          {MENU.map(([name, w, at]) => (
            <div key={name} className={"shrink-0 whitespace-nowrap " + w}>
              {name.slice(0, at)}<u className="underline-offset-[3px]">{name[at]}</u>{name.slice(at + 1)}
            </div>
          ))}
        </div>
        <Toolbars />
        <div className="mt-px flex h-[541px] border-r border-[#1d2022]">
          <Docks />
          <MapCanvas />
        </div>
        <StatusBar />
      </div>
      <Dialog />
    </div>
  );
}
